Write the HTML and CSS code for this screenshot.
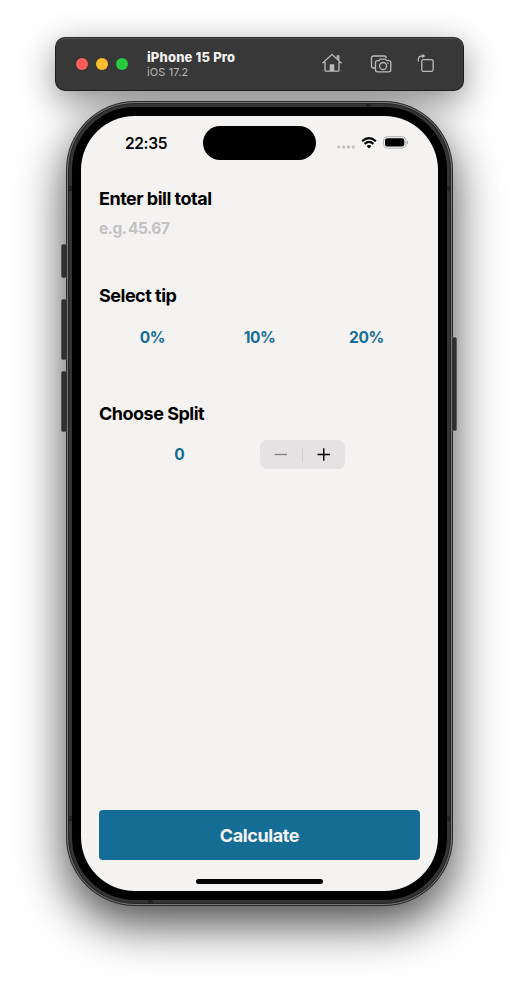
FILE: index.html
```html
<!DOCTYPE html>
<html lang="en">
<head>
<meta charset="utf-8">
<title>Tip calculator</title>
<link rel="stylesheet" href="styles.css">
</head>
<body>
<header class="toolbar">
  <div class="lights"><i class="red"></i><i class="yellow"></i><i class="green"></i></div>
  <div class="device"><strong>iPhone 15 Pro</strong><span>iOS 17.2</span></div>
  <div class="tools">
    <svg class="home" width="22" height="22" viewBox="0 0 22 22"><path d="M1.500 11.200 11 2.300l9.500 8.900M4 10v8.300q0 .9.900.9h12.200q.9 0 .9-.9V10M16.300 6.500V3.800h1.500V8"/><path class="solid" d="M8.700 19v-6q0-.7.700-.7h3.200q.7 0 .7.700v6z"/></svg>
    <svg class="camera" width="22" height="20" viewBox="0 0 22 20"><path d="M5 14H3.500Q1.500 14 1.500 12V4Q1.500 2 3.500 2H14.500Q16 2 16.500 4M7.500 6.700H9L10.200 5.200H15.500L16.700 6.700H18.800Q20.800 6.700 20.800 8.700V15.800Q20.800 17.800 18.800 17.800H7.500Q5.500 17.800 5.500 15.800V8.700Q5.500 6.700 7.500 6.700Z"/><circle cx="13.100" cy="12" r="3.500"/><circle class="solid" cx="18" cy="9.200" r=".7"/></svg>
    <svg class="rotate" width="18" height="20" viewBox="0 0 18 20"><rect x="4.800" y="6.700" width="11.300" height="11.600" rx="1.500"/><path d="M1.300 8.500V6.800Q1.300 3 5 3H6"/><path class="solid" d="M5.300 .7v4.600L8.300 3z"/></svg>
  </div>
</header>
<main class="phone">
  <i class="key action"></i><i class="key up"></i><i class="key down"></i><i class="key power"></i>
  <i class="seam s1"></i><i class="seam s2"></i><i class="seam s3"></i><i class="seam s4"></i><i class="seam s5"></i><i class="seam s6"></i>
  <div class="bezel">
    <div class="screen">
      <div class="status">
        <time>22:35</time>
        <div class="island"></div>
        <div class="signals">
          <svg width="18" height="4" viewBox="0 0 18 4" fill="#c4c4c4"><circle cx="1.700" cy="2" r="1.700"/><circle cx="6.600" cy="2" r="1.700"/><circle cx="11.500" cy="2" r="1.700"/><circle cx="16.300" cy="2" r="1.700"/></svg>
          <svg class="wifi" width="16" height="12" viewBox="0 0 16 12"><path fill="none" stroke="#000" stroke-width="2.100" d="M1.100 4.300Q8-1.900 14.900 4.300M3.600 6.900Q8 2.900 12.400 6.900"/><path d="M8 11.500 5.600 9.100Q8 7 10.400 9.100z"/></svg>
          <svg class="battery" width="26" height="13" viewBox="0 0 26 13"><rect x=".5" y=".7" width="22.300" height="11.400" rx="3.700" fill="none" stroke="#b0b0b0"/><rect x="2" y="2.200" width="19.300" height="8.400" rx="2.300"/><path fill="#aaa" d="M23.800 4.400q1.400.7 1.400 2t-1.400 2z"/></svg>
        </div>
      </div>
      <section class="bill"><h2>Enter bill total</h2><div class="placeholder">e.g. 45.67</div></section>
      <section class="tip"><h2>Select tip</h2><div class="tips"><span>0%</span><span>10%</span><span>20%</span></div></section>
      <section class="split"><h2>Choose Split</h2>
        <div class="row"><b>0</b><div class="stepper"><svg width="85" height="29" viewBox="0 0 85 29"><path stroke="#858587" stroke-width="1.400" d="M14.500 14.500h12.500"/><path stroke="#d0d0d1" d="M42.500 7v15.500"/><path stroke="#000" stroke-width="1.400" d="M57.500 14.500h12.500M63.750 8.250v12.500"/></svg></div></div>
      </section>
      <div class="calculate">Calculate</div>
      <div class="indicator"></div>
    </div>
  </div>
</main>
</body>
</html>
```
FILE: styles.css
```css
* { box-sizing: border-box; }
body { margin: 0; padding-top: 37px; height: 981px; background: #fff; font-family: Inter, "Liberation Sans", sans-serif; overflow: hidden; }
body::before { content: ""; position: absolute; left: 55px; top: 37px; width: 409px; height: 54px; border-radius: 10px; box-shadow: 0 10px 34px rgba(0,0,0,.45); }
.toolbar { position: relative; z-index: 1; width: 409px; height: 54px; margin-left: 55px; padding: 0 28px 0 21px; display: flex; align-items: center; background: #383838; border: 1px solid #1e1e1e; border-top-color: #292929; border-radius: 10px; box-shadow: inset 0 1px #555; }
.lights { display: flex; gap: 8px; margin-left: -1px; }
.lights i { width: 12px; height: 12px; border-radius: 50%; }
.red { background: #ff5f57; }
.yellow { background: #febc2e; }
.green { background: #28c840; }
.device { margin: 1px 0 0 19px; width: 120px; display: flex; flex-direction: column; color: #f2f2f2; font-size: 13px; line-height: 15px; }
.device strong { font-weight: 800; letter-spacing: .17px; white-space: nowrap; }
.device span { color: #b9b9b9; font-size: 11px; line-height: 14px; letter-spacing: .1px; }
.tools { margin-left: auto; display: flex; align-items: center; }
.tools svg { fill: none; stroke: #bababa; stroke-width: 1.3; }
.tools .solid { fill: #bababa; stroke: none; }
.home { margin: -2px 27px 0 0; }
.camera { margin: -1px 25px 0 0; }
.rotate { margin-top: -3px; }
.phone { position: relative; isolation: isolate; width: 387px; height: 805px; margin: 10px 0 0 66px; padding: 1px; border-radius: 69px; background: #2a2a2a; box-shadow: 0 18px 48px rgba(0,0,0,.72); }
.bezel { width: 385px; height: 803px; padding: 9px; border: 5px solid #343434; border-radius: 68px; background: #000; }
.phone::after { content: ""; position: absolute; inset: 1px; border: 1px solid #777; border-radius: 68px; box-shadow: inset 0 0 0 1px #262626; pointer-events: none; }
.screen { width: 357px; height: 775px; padding: 0 18px; display: flex; flex-direction: column; background: #f4f3f2; border-radius: 54px; }
.key { position: absolute; z-index: -1; left: -5px; width: 8px; background: #303030; border: 1px solid #5a5a5a; border-radius: 2px; }
.action { top: 143px; height: 34px; }
.up { top: 198px; height: 61px; }
.down { top: 270px; height: 61px; }
.power { left: auto; right: -4px; top: 236px; height: 94px; }
.seam { position: absolute; z-index: 1; width: 4px; height: 5px; background: #222; }
.s1 { left: 2px; top: 85px; }
.s2 { right: 2px; top: 85px; }
.s3 { left: 2px; top: 715px; }
.s4 { right: 2px; top: 715px; }
.s5 { left: 300px; top: 2px; width: 5px; height: 4px; }
.s6 { left: 82px; bottom: 2px; width: 5px; height: 4px; }
.status { height: 75px; padding-top: 10px; display: flex; align-items: flex-start; }
time { width: 104px; padding-left: 26px; font-size: 15.5px; font-weight: 600; line-height: 35px; letter-spacing: -.35px; }
.island { width: 113px; height: 34px; border-radius: 17px; background: #000; }
.signals { height: 34px; margin-left: 21px; display: flex; align-items: center; }
.signals > :first-child { transform: translateY(4px); }
.wifi { margin: -1px 0 0 6px; }
.battery { margin: -1px 0 0 6px; }
h2 { margin: 0; font-size: 18px; line-height: 22px; font-weight: 700; letter-spacing: -.5px; white-space: nowrap; }
.bill { height: 94px; margin-top: -3px; }
.placeholder { margin-top: 9px; color: #c2c1c3; font-size: 15.5px; font-weight: 700; line-height: 20px; letter-spacing: -.5px; word-spacing: -1px; }
.tip { height: 118px; padding-top: 3px; }
.tips { display: grid; grid-template-columns: repeat(3, 107px); margin-top: 21px; color: #166d95; text-align: center; font-size: 15.5px; font-weight: 700; line-height: 20px; letter-spacing: -.4px; }
.split { padding-top: 3px; }
.row { height: 30px; margin-top: 14.5px; display: flex; align-items: center; }
.row b { width: 161px; text-align: center; color: #166d95; font-size: 15.5px; font-weight: 700; }
.stepper { width: 85px; height: 29px; border-radius: 7px; background: #e4e2e3; }
.stepper svg { display: block; }
.calculate { width: 321px; height: 50px; margin-top: auto; border-radius: 4px; background: #156d96; color: #f4f3f2; text-align: center; font-size: 18px; font-weight: 650; line-height: 51px; letter-spacing: -.4px; }
.indicator { width: 127px; height: 5px; margin: 19px auto 7px; border-radius: 3px; background: #000; }
```
